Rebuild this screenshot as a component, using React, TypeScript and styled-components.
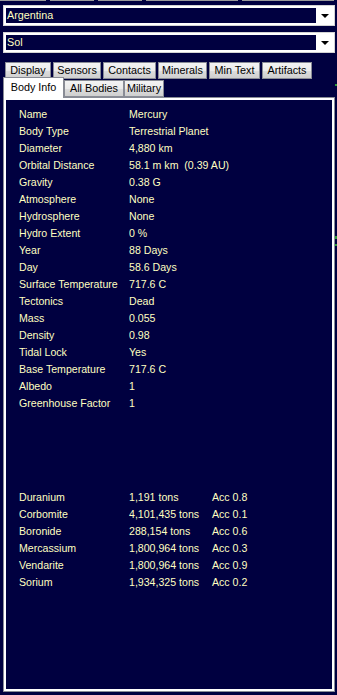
import { Fragment } from "react";
import styled, { createGlobalStyle } from "styled-components";

const GlobalStyle = createGlobalStyle`
  html, body {
    margin: 0;
    padding: 0;
    background: #000040;
  }
  body {
    font-family: "Liberation Sans", Arial, sans-serif;
  }
`;

const Window = styled.div`
  position: relative;
  width: 337px;
  height: 695px;
  overflow: hidden;
  background: #000040;
`;

const ButtonStubs = styled.div`
  display: flex;
  gap: 4px;
  height: 1px;
`;

const Stub = styled.div<{ $w: number }>`
  width: ${(p) => p.$w}px;
  background: #9a9a9a;
`;

const Combo = styled.div<{ $top: number }>`
  box-sizing: border-box;
  display: flex;
  width: 332px;
  height: 21px;
  margin: ${(p) => p.$top}px 0 0 3px;
  padding: 2px 0 2px 2px;
  border: 1px solid #d4d4d4;
  background: #fff;
`;

const ComboField = styled.div`
  flex: 1;
  padding-left: 1px;
  background: #000040;
  color: #ffffc0;
  font-size: 10.8px;
  line-height: 15px;
`;

const ComboArrow = styled.div`
  display: flex;
  align-items: center;
  justify-content: center;
  width: 18px;
`;

const Triangle = styled.span`
  width: 0;
  height: 0;
  border-left: 4px solid transparent;
  border-right: 4px solid transparent;
  border-top: 4px solid #000;
`;

const TabStrip = styled.div`
  margin-top: 9px;
`;

const TabRow = styled.div<{ $pad: number; $gap: number; $overlap?: boolean }>`
  display: flex;
  align-items: flex-end;
  gap: ${(p) => p.$gap}px;
  padding-left: ${(p) => p.$pad}px;
  margin-top: ${(p) => (p.$overlap ? -2 : 0)}px;
  height: ${(p) => (p.$overlap ? 20 : 17)}px;
`;

const Tab = styled.div<{ $w: number; $active?: boolean }>`
  box-sizing: border-box;
  position: relative;
  width: ${(p) => p.$w}px;
  height: ${(p) => (p.$active ? 21 : 17)}px;
  margin-bottom: ${(p) => (p.$active ? -1 : 0)}px;
  z-index: ${(p) => (p.$active ? 2 : 1)};
  border: 1px solid #898c95;
  border-bottom: ${(p) => (p.$active ? "none" : "1px solid #898c95")};
  background: ${(p) =>
    p.$active ? "#fff" : "linear-gradient(#f3f3f3, #ebebeb 50%, #dddddd 51%, #cfcfcf)"};
  color: #000;
  font-size: 10.8px;
  line-height: ${(p) => (p.$active ? 19 : 15)}px;
  text-align: center;
  white-space: nowrap;
`;

const Panel = styled.div`
  box-sizing: border-box;
  width: 332px;
  height: 595px;
  margin-left: 3px;
  padding: 2px;
  border: 1px solid #898c95;
  background: #fff;
`;

const Page = styled.div`
  box-sizing: border-box;
  height: 100%;
  padding: 6px 0 0 13px;
  background: #000040;
  color: #ffffc0;
  font-size: 10.6px;
`;

const InfoGrid = styled.div<{ $cols: string; $top?: number }>`
  display: grid;
  grid-template-columns: ${(p) => p.$cols};
  grid-auto-rows: 17px;
  align-items: center;
  margin-top: ${(p) => p.$top ?? 0}px;
  white-space: pre;
`;

const Cell = styled.span`
  line-height: 17px;
`;

const EdgeMark = styled.div<{ $top: number; $h: number }>`
  position: absolute;
  right: 0;
  top: ${(p) => p.$top}px;
  width: 2px;
  height: ${(p) => p.$h}px;
  background: #2f9a3a;
`;

const rowOneTabs = [
  { label: "Display", w: 46 },
  { label: "Sensors", w: 48 },
  { label: "Contacts", w: 53 },
  { label: "Minerals", w: 49 },
  { label: "Min Text", w: 51 },
  { label: "Artifacts", w: 50 },
];

const rowTwoTabs = [
  { label: "Body Info", w: 61, active: true },
  { label: "All Bodies", w: 60 },
  { label: "Military", w: 40 },
];

const bodyInfo: [string, string][] = [
  ["Name", "Mercury"],
  ["Body Type", "Terrestrial Planet"],
  ["Diameter", "4,880 km"],
  ["Orbital Distance", "58.1 m km  (0.39 AU)"],
  ["Gravity", "0.38 G"],
  ["Atmosphere", "None"],
  ["Hydrosphere", "None"],
  ["Hydro Extent", "0 %"],
  ["Year", "88 Days"],
  ["Day", "58.6 Days"],
  ["Surface Temperature", "717.6 C"],
  ["Tectonics", "Dead"],
  ["Mass", "0.055"],
  ["Density", "0.98"],
  ["Tidal Lock", "Yes"],
  ["Base Temperature", "717.6 C"],
  ["Albedo", "1"],
  ["Greenhouse Factor", "1"],
];

const minerals: [string, string, string][] = [
  ["Duranium", "1,191 tons", "Acc 0.8"],
  ["Corbomite", "4,101,435 tons", "Acc 0.1"],
  ["Boronide", "288,154 tons", "Acc 0.6"],
  ["Mercassium", "1,800,964 tons", "Acc 0.3"],
  ["Vendarite", "1,800,964 tons", "Acc 0.9"],
  ["Sorium", "1,934,325 tons", "Acc 0.2"],
];

export default function App() {
  return (
    <Window>
      <GlobalStyle />
      <ButtonStubs>
        {[46, 44, 44, 92, 92].map((w, i) => (
          <Stub key={i} $w={w} />
        ))}
      </ButtonStubs>

      <Combo $top={4}>
        <ComboField>Argentina</ComboField>
        <ComboArrow>
          <Triangle />
        </ComboArrow>
      </Combo>
      <Combo $top={6}>
        <ComboField>Sol</ComboField>
        <ComboArrow>
          <Triangle />
        </ComboArrow>
      </Combo>

      <TabStrip>
        <TabRow $pad={5} $gap={2}>
          {rowOneTabs.map((t) => (
            <Tab key={t.label} $w={t.w}>
              {t.label}
            </Tab>
          ))}
        </TabRow>
        <TabRow $pad={3} $gap={0} $overlap>
          {rowTwoTabs.map((t) => (
            <Tab key={t.label} $w={t.w} $active={t.active}>
              {t.label}
            </Tab>
          ))}
        </TabRow>
      </TabStrip>

      <Panel>
        <Page>
          <InfoGrid $cols="110px auto">
            {bodyInfo.map(([k, v]) => (
              <Fragment key={k}>
                <Cell>{k}</Cell>
                <Cell>{v}</Cell>
              </Fragment>
            ))}
          </InfoGrid>
          <InfoGrid $cols="110px 83px auto" $top={77}>
            {minerals.map(([name, amount, acc]) => (
              <Fragment key={name}>
                <Cell>{name}</Cell>
                <Cell>{amount}</Cell>
                <Cell>{acc}</Cell>
              </Fragment>
            ))}
          </InfoGrid>
        </Page>
      </Panel>

      <EdgeMark $top={84} $h={2} />
      <EdgeMark $top={236} $h={3} />
      <EdgeMark $top={244} $h={2} />
    </Window>
  );
}
